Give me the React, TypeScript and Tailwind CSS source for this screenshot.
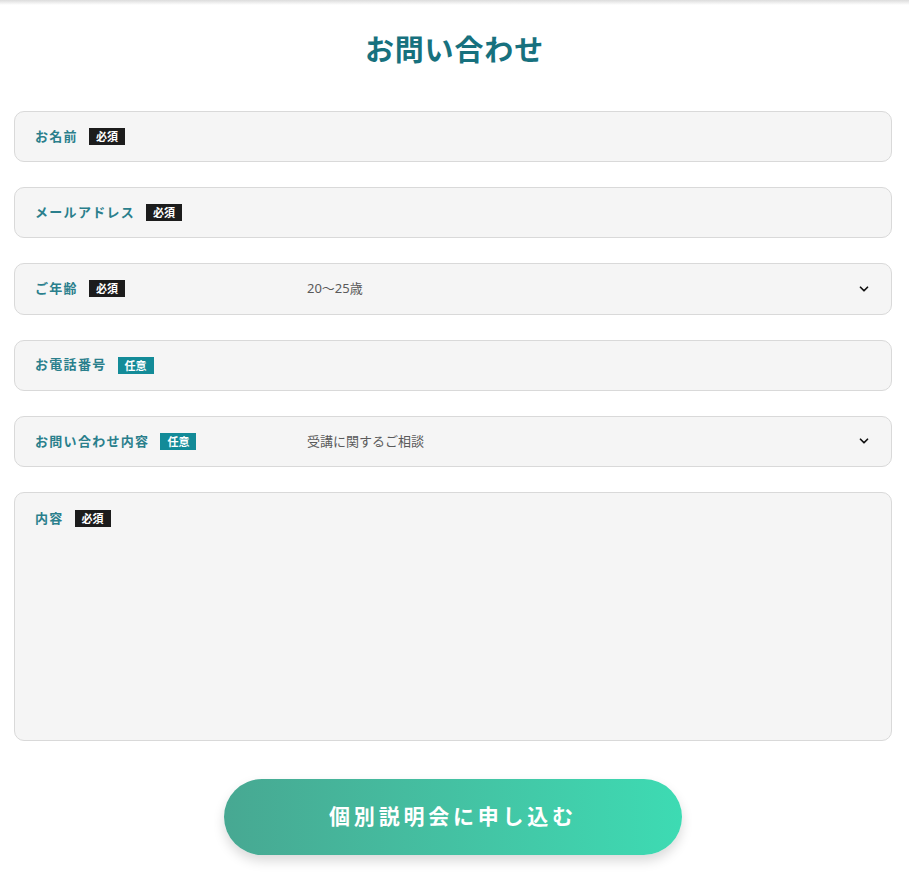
import { ChevronDown } from 'lucide-react';

const FONT = 'font-["Noto_Sans","Noto_Sans_CJK_JP",sans-serif]';

type FieldProps = {
  label: string;
  required?: boolean;
  value?: string;
  select?: boolean;
};

function Badge({ required }: { required?: boolean }) {
  return (
    <span
      className={`inline-flex h-[17px] w-[36px] items-center justify-center text-[11px] font-bold leading-none text-white ${
        required ? 'bg-[#1c1c1c]' : 'bg-[#138b98]'
      }`}
    >
      {required ? '必須' : '任意'}
    </span>
  );
}

function Field({ label, required, value, select }: FieldProps) {
  return (
    <div className="flex h-[51.2px] items-center rounded-[10px] border border-[#d9d9d9] bg-[#f5f5f5] pl-5 pr-[20px]">
      <div className="flex w-[272px] shrink-0 items-center gap-[11px]">
        <span className="text-[13px] font-bold tracking-[0.1em] text-[#2a7f8c]">{label}</span>
        <Badge required={required} />
      </div>
      <span className="flex-1 text-[13px] text-[#5a5a5a]">{value}</span>
      {select && <ChevronDown className="h-[14px] w-[14px] text-[#111]" strokeWidth={3} />}
    </div>
  );
}

export default function App() {
  return (
    <div className={`min-h-[892px] w-full bg-white ${FONT}`}>
      <div className="h-[5px] bg-gradient-to-b from-[#dcdcdc] to-white" />
      <h1 className="pt-[26px] text-center text-[29px] font-bold leading-[38px] tracking-[0.03em] text-[#17717e]">
        お問い合わせ
      </h1>
      <form
        className="mt-[42px] flex flex-col gap-[25px] pl-[14px] pr-[17px]"
        onSubmit={(e) => e.preventDefault()}
      >
        <Field label="お名前" required />
        <Field label="メールアドレス" required />
        <Field label="ご年齢" required value="20〜25歳" select />
        <Field label="お電話番号" />
        <Field label="お問い合わせ内容" value="受講に関するご相談" select />
        <div className="h-[249px] rounded-[10px] border border-[#d9d9d9] bg-[#f5f5f5] pl-5 pt-4">
          <div className="flex items-center gap-[11px]">
            <span className="text-[13px] font-bold tracking-[0.1em] text-[#2a7f8c]">内容</span>
            <Badge required />
          </div>
        </div>
        <div className="flex justify-center pt-[13px]">
          <button
            type="submit"
            className="h-[76px] w-[458px] rounded-full bg-gradient-to-r from-[#47a892] to-[#3ddbb3] text-[21px] font-bold tracking-[0.18em] text-white shadow-[0_6px_12px_rgba(0,0,0,0.15)]"
          >
            個別説明会に申し込む
          </button>
        </div>
      </form>
    </div>
  );
}
